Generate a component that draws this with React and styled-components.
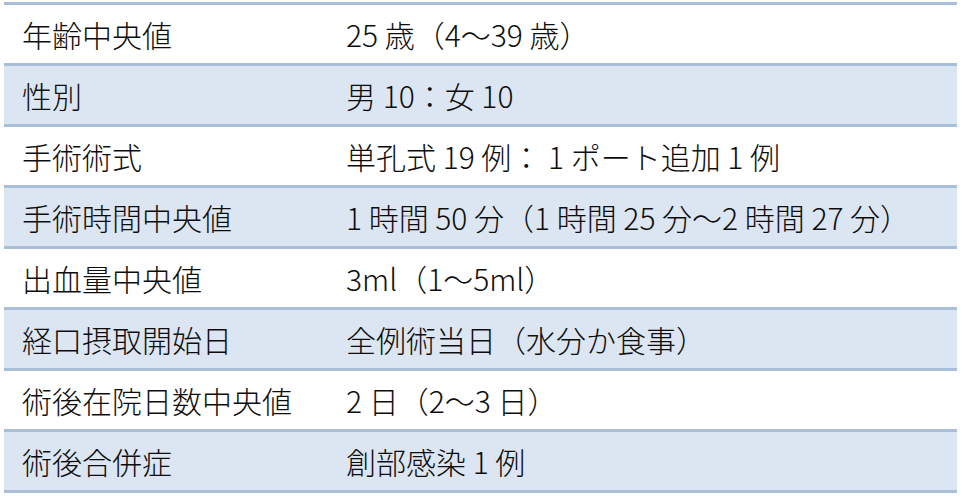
import React from "react";
import styled, { createGlobalStyle } from "styled-components";

const Global = createGlobalStyle`
  html, body { margin: 0; padding: 0; background: #ffffff; }
  body { font-family: "Noto Sans CJK JP", "Noto Sans", sans-serif; }
`;

const Page = styled.div`
  width: 964px;
  height: 497px;
  padding: 2px 7px 0 4px;
  box-sizing: border-box;
  background: #ffffff;
`;

const Table = styled.div`
  display: grid;
  grid-template-columns: 324px 1fr;
  border-top: 3px solid #a9bed8;
`;

const Row = styled.div`
  display: contents;
`;

const Cell = styled.div`
  height: 58px;
  display: flex;
  align-items: center;
  padding-left: 18px;
  background: ${(p) => (p.$shaded ? "#dce6f2" : "#ffffff")};
  border-bottom: 3px solid #a9bed8;
  color: #0d0d0d;
  font-size: 30px;
  font-weight: 300;
  line-height: 1;
  white-space: nowrap;
`;

const rows = [
  ["年齢中央値", "25 歳（4～39 歳）"],
  ["性別", "男 10：女 10"],
  ["手術術式", "単孔式 19 例： 1 ポート追加 1 例"],
  ["手術時間中央値", "1 時間 50 分（1 時間 25 分～2 時間 27 分）"],
  ["出血量中央値", "3ml（1～5ml）"],
  ["経口摂取開始日", "全例術当日（水分か食事）"],
  ["術後在院日数中央値", "2 日（2～3 日）"],
  ["術後合併症", "創部感染 1 例"],
];

export default function App() {
  return (
    <>
      <Global />
      <Page>
        <Table>
          {rows.map(([label, value], i) => (
            <Row key={label}>
              <Cell $shaded={i % 2 === 1}>{label}</Cell>
              <Cell $shaded={i % 2 === 1}>{value}</Cell>
            </Row>
          ))}
        </Table>
      </Page>
    </>
  );
}
